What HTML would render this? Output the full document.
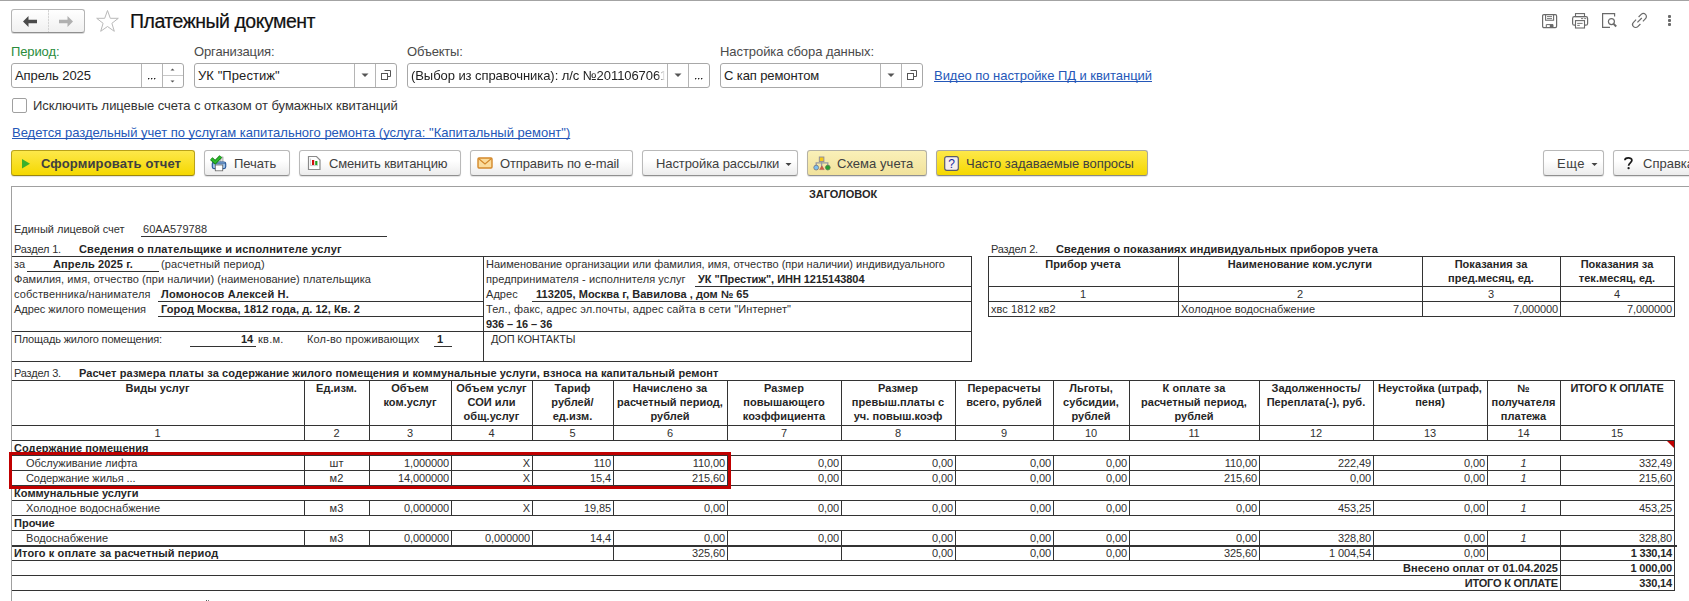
<!DOCTYPE html>
<html><head><meta charset="utf-8"><style>
html,body{margin:0;padding:0;background:#fff;width:1689px;height:601px;overflow:hidden;position:relative}
body{font-family:'Liberation Sans', sans-serif;}
body>div,body>svg{position:absolute}
</style></head><body>
<div style="left:0px;top:0px;width:1689px;height:1px;background:#a3a3a3;"></div>
<div style="left:11px;top:9px;width:74px;height:24px;box-sizing:border-box;border:1px solid #b4b4b4;border-bottom-color:#8f8f8f;border-radius:3px;background:linear-gradient(#ffffff,#f0f0f0);box-shadow:0 1px 0 rgba(0,0,0,0.15)"></div>
<div style="left:48px;top:10px;width:1px;height:22px;background:repeating-linear-gradient(#d4d4d4 0 2px,#ececec 2px 3px)"></div>
<svg style="left:22px;top:15px" width="16" height="13" viewBox="0 0 16 13"><path d="M1 6.5 L6.5 1 L6.5 4.8 L15 4.8 L15 8.2 L6.5 8.2 L6.5 12 Z" fill="#4a4a4a"/></svg>
<svg style="left:58px;top:15px" width="16" height="13" viewBox="0 0 16 13"><path d="M15 6.5 L9.5 1 L9.5 4.8 L1 4.8 L1 8.2 L9.5 8.2 L9.5 12 Z" fill="#b0b0b0"/></svg>
<svg style="left:95px;top:9px" width="25" height="24" viewBox="0 0 25 24"><path d="M12.5 1.5 L15.3 9.3 L23.3 9.3 L16.9 14.3 L19.3 22.3 L12.5 17.5 L5.7 22.3 L8.1 14.3 L1.7 9.3 L9.7 9.3 Z" fill="none" stroke="#b9b9b9" stroke-width="1"/></svg>
<div style="top:11px;font-size:19.5px;line-height:20px;height:20px;color:#111;white-space:nowrap;letter-spacing:-0.486px;left:130px;-webkit-text-stroke:0.2px #111;">Платежный документ</div>
<svg style="left:1540px;top:12px" width="20" height="18" viewBox="0 0 20 18"><rect x="2.6" y="2.6" width="14" height="13" rx="1.3" fill="none" stroke="#6a6a6a" stroke-width="1.2"/><path d="M5.6 2.6 V8.3 H13.6 V2.6" fill="none" stroke="#6a6a6a" stroke-width="1.1"/><line x1="7" y1="4.6" x2="12" y2="4.6" stroke="#6a6a6a" stroke-width="0.9"/><line x1="7" y1="6.6" x2="12" y2="6.6" stroke="#6a6a6a" stroke-width="0.9"/><path d="M6.3 15.6 V12.6 H13 V15.6" fill="none" stroke="#6a6a6a" stroke-width="1"/><rect x="9.8" y="12.6" width="3.2" height="3" fill="#6a6a6a"/></svg>
<svg style="left:1570px;top:11px" width="20" height="19" viewBox="0 0 20 19"><rect x="5.5" y="2.6" width="9" height="3" fill="none" stroke="#6a6a6a" stroke-width="1.1"/><rect x="2.6" y="5.6" width="15" height="8.6" rx="1.8" fill="none" stroke="#6a6a6a" stroke-width="1.2"/><rect x="5.5" y="9.6" width="9" height="7.4" fill="#fff" stroke="#6a6a6a" stroke-width="1.1"/><line x1="7.2" y1="12.4" x2="12.6" y2="12.4" stroke="#6a6a6a" stroke-width="0.9"/><line x1="7.2" y1="14.4" x2="9.8" y2="14.4" stroke="#6a6a6a" stroke-width="0.9"/><line x1="11" y1="7.6" x2="13.2" y2="7.6" stroke="#6a6a6a" stroke-width="0.9"/><line x1="14.2" y1="7.6" x2="16.2" y2="7.6" stroke="#6a6a6a" stroke-width="0.9"/></svg>
<svg style="left:1600px;top:11px" width="20" height="19" viewBox="0 0 20 19"><path d="M14.6 5.6 V2.6 H2.6 V16.4 H10" fill="none" stroke="#6a6a6a" stroke-width="1.2"/><circle cx="11.4" cy="10.6" r="3" fill="#fff" stroke="#6a6a6a" stroke-width="1.2"/><line x1="13.6" y1="12.9" x2="16.2" y2="15.5" stroke="#6a6a6a" stroke-width="2"/></svg>
<svg style="left:1630px;top:11px" width="20" height="19" viewBox="0 0 20 19"><path d="M7.4 11.4 L11.8 7" stroke="#6a6a6a" stroke-width="1.2"/><path d="M8.6 6 L11.2 3.4 a3 3 0 0 1 4.3 4.3 L12.9 10.3 M10.4 13 L7.8 15.6 a3 3 0 0 1 -4.3 -4.3 L6.1 8.7" fill="none" stroke="#6a6a6a" stroke-width="1.2"/></svg>
<div style="left:1668px;top:15px;width:3px;height:3px;border-radius:1px;background:#6a6a6a"></div>
<div style="left:1668px;top:19px;width:3px;height:3px;border-radius:1px;background:#6a6a6a"></div>
<div style="left:1668px;top:23px;width:3px;height:3px;border-radius:1px;background:#6a6a6a"></div>
<div style="top:42px;font-size:13px;line-height:20px;height:20px;color:#2a8c3c;white-space:nowrap;letter-spacing:-0.117px;left:11px;">Период:</div>
<div style="top:42px;font-size:13px;line-height:20px;height:20px;color:#4a4a4a;white-space:nowrap;letter-spacing:-0.136px;left:194px;">Организация:</div>
<div style="top:42px;font-size:13px;line-height:20px;height:20px;color:#4a4a4a;white-space:nowrap;letter-spacing:-0.192px;left:407px;">Объекты:</div>
<div style="top:42px;font-size:13px;line-height:20px;height:20px;color:#4a4a4a;white-space:nowrap;letter-spacing:-0.061px;left:720px;">Настройка сбора данных:</div>
<div style="left:11px;top:63px;width:173px;height:25px;box-sizing:border-box;border:1px solid #a8a8a8;border-radius:3px;background:#fff"></div>
<div style="left:141px;top:64px;width:1px;height:23px;background:#b5b5b5;"></div>
<div style="left:162px;top:64px;width:1px;height:23px;background:#b5b5b5;"></div>
<div style="top:66px;font-size:13px;line-height:20px;height:20px;color:#222;white-space:nowrap;letter-spacing:-0.067px;left:15px;">Апрель 2025</div>
<div style="left:148px;top:78px;width:1px;height:1px;background:#222;"></div>
<div style="left:149px;top:78px;width:1px;height:1px;background:#aaa;"></div>
<div style="left:148px;top:79px;width:1px;height:1px;background:#aaa;"></div>
<div style="left:151px;top:78px;width:1px;height:1px;background:#222;"></div>
<div style="left:152px;top:78px;width:1px;height:1px;background:#aaa;"></div>
<div style="left:151px;top:79px;width:1px;height:1px;background:#aaa;"></div>
<div style="left:154px;top:78px;width:1px;height:1px;background:#222;"></div>
<div style="left:155px;top:78px;width:1px;height:1px;background:#aaa;"></div>
<div style="left:154px;top:79px;width:1px;height:1px;background:#aaa;"></div>
<div style="left:163px;top:75px;width:20px;height:1px;background:#c8c8c8;"></div>
<svg style="left:169px;top:66px" width="7" height="20" viewBox="0 0 7 20"><path d="M1.5 4.5 L3.5 2.5 L5.5 4.5Z" fill="#555"/><path d="M1.5 14.5 L3.5 16.5 L5.5 14.5Z" fill="#555"/></svg>
<div style="left:194px;top:63px;width:203px;height:25px;box-sizing:border-box;border:1px solid #a8a8a8;border-radius:3px;background:#fff"></div>
<div style="left:354px;top:64px;width:1px;height:23px;background:#b5b5b5;"></div>
<div style="left:375px;top:64px;width:1px;height:23px;background:#b5b5b5;"></div>
<div style="top:66px;font-size:13px;line-height:20px;height:20px;color:#222;white-space:nowrap;letter-spacing:0.076px;left:198px;">УК &quot;Престиж&quot;</div>
<svg style="left:360.5px;top:73px" width="8" height="5" viewBox="0 0 8 5"><path d="M0.5 0.5 L7.5 0.5 L4 4Z" fill="#555"/></svg>
<svg style="left:380px;top:69px" width="12" height="12" viewBox="0 0 12 12"><path d="M4.5 1.5 H10.5 V7.5 H7.5" fill="none" stroke="#555" stroke-width="1"/><rect x="1.5" y="4.5" width="6" height="6" fill="none" stroke="#555" stroke-width="1"/></svg>
<div style="left:407px;top:63px;width:303px;height:25px;box-sizing:border-box;border:1px solid #a8a8a8;border-radius:3px;background:#fff"></div>
<div style="left:667px;top:64px;width:1px;height:23px;background:#b5b5b5;"></div>
<div style="left:688px;top:64px;width:1px;height:23px;background:#b5b5b5;"></div>
<div style="left:411px;top:66px;width:254px;overflow:hidden;-webkit-mask-image:linear-gradient(to right,#000 246px,transparent 254px);mask-image:linear-gradient(to right,#000 246px,transparent 254px);font-size:13px;line-height:20px;height:20px;color:#222;white-space:nowrap;letter-spacing:-0.069px">(Выбор из справочника): л/с №2011067061</div>
<svg style="left:673.5px;top:73px" width="8" height="5" viewBox="0 0 8 5"><path d="M0.5 0.5 L7.5 0.5 L4 4Z" fill="#555"/></svg>
<div style="left:695px;top:78px;width:1px;height:1px;background:#222;"></div>
<div style="left:696px;top:78px;width:1px;height:1px;background:#aaa;"></div>
<div style="left:695px;top:79px;width:1px;height:1px;background:#aaa;"></div>
<div style="left:698px;top:78px;width:1px;height:1px;background:#222;"></div>
<div style="left:699px;top:78px;width:1px;height:1px;background:#aaa;"></div>
<div style="left:698px;top:79px;width:1px;height:1px;background:#aaa;"></div>
<div style="left:701px;top:78px;width:1px;height:1px;background:#222;"></div>
<div style="left:702px;top:78px;width:1px;height:1px;background:#aaa;"></div>
<div style="left:701px;top:79px;width:1px;height:1px;background:#aaa;"></div>
<div style="left:720px;top:63px;width:203px;height:25px;box-sizing:border-box;border:1px solid #a8a8a8;border-radius:3px;background:#fff"></div>
<div style="left:880px;top:64px;width:1px;height:23px;background:#b5b5b5;"></div>
<div style="left:901px;top:64px;width:1px;height:23px;background:#b5b5b5;"></div>
<div style="top:66px;font-size:13px;line-height:20px;height:20px;color:#222;white-space:nowrap;letter-spacing:-0.110px;left:724px;">С кап ремонтом</div>
<svg style="left:886.5px;top:73px" width="8" height="5" viewBox="0 0 8 5"><path d="M0.5 0.5 L7.5 0.5 L4 4Z" fill="#555"/></svg>
<svg style="left:906px;top:69px" width="12" height="12" viewBox="0 0 12 12"><path d="M4.5 1.5 H10.5 V7.5 H7.5" fill="none" stroke="#555" stroke-width="1"/><rect x="1.5" y="4.5" width="6" height="6" fill="none" stroke="#555" stroke-width="1"/></svg>
<div style="top:66px;font-size:13px;line-height:20px;height:20px;color:#2457b8;white-space:nowrap;letter-spacing:-0.043px;left:934px;text-decoration:underline;text-decoration-skip-ink:none;">Видео по настройке ПД и квитанций</div>
<div style="left:12px;top:98px;width:15px;height:15px;box-sizing:border-box;border:1px solid #a0a0a0;border-radius:2px;background:#fff"></div>
<div style="top:96px;font-size:13px;line-height:20px;height:20px;color:#333;white-space:nowrap;letter-spacing:-0.050px;left:33px;">Исключить лицевые счета с отказом от бумажных квитанций</div>
<div style="top:123px;font-size:13px;line-height:20px;height:20px;color:#2457b8;white-space:nowrap;left:12px;text-decoration:underline;text-decoration-skip-ink:none;">Ведется раздельный учет по услугам капитального ремонта (услуга: &quot;Капитальный ремонт&quot;)</div>
<div style="left:11px;top:150px;width:184px;height:26px;box-sizing:border-box;border:1px solid #b9a21a;border-bottom-color:#9a8610;border-radius:3px;background:linear-gradient(#fde84a,#f5d800);box-shadow:0 1px 1px rgba(0,0,0,0.12)"></div>
<svg style="left:22px;top:159px" width="9" height="10" viewBox="0 0 9 10"><path d="M0 0 L8 4.75 L0 9.5Z" fill="#3bb02c"/></svg>
<div style="top:154px;font-size:13px;line-height:20px;height:20px;color:#404040;white-space:nowrap;font-weight:bold;letter-spacing:0.138px;left:41px;">Сформировать отчет</div>
<div style="left:204px;top:150px;width:86px;height:26px;box-sizing:border-box;border:1px solid #b9b9b9;border-bottom-color:#909090;border-radius:3px;background:linear-gradient(#ffffff 40%,#ececec);box-shadow:0 1px 1px rgba(0,0,0,0.12)"></div>
<svg style="left:210px;top:154px" width="18" height="18" viewBox="0 0 18 18"><rect x="10" y="3" width="3" height="6" fill="#ddd" stroke="#888" stroke-width="0.6"/><rect x="2.3" y="8" width="13.4" height="6.6" rx="1.8" fill="#9fc5ec" stroke="#2a5a9a" stroke-width="1.2"/><line x1="3" y1="9.6" x2="15" y2="9.6" stroke="#4a6ea0" stroke-width="0.8"/><rect x="5.3" y="11" width="7.4" height="5.8" fill="#fff" stroke="#666" stroke-width="0.8"/><path d="M1.3 4.6 L5.2 8.2 L10.8 2.4" fill="none" stroke="#157a15" stroke-width="3.6"/><path d="M1.3 4.6 L5.2 8.2 L10.8 2.4" fill="none" stroke="#2cb82c" stroke-width="2.2"/></svg>
<div style="top:154px;font-size:13px;line-height:20px;height:20px;color:#404040;white-space:nowrap;letter-spacing:-0.082px;left:234px;">Печать</div>
<div style="left:299px;top:150px;width:162px;height:26px;box-sizing:border-box;border:1px solid #b9b9b9;border-bottom-color:#909090;border-radius:3px;background:linear-gradient(#ffffff 40%,#ececec);box-shadow:0 1px 1px rgba(0,0,0,0.12)"></div>
<svg style="left:307px;top:155px" width="15" height="16" viewBox="0 0 15 16"><path d="M1.5 1.5 H9.5 L13 5 V14.5 H1.5Z" fill="#fff" stroke="#8a8a8a" stroke-width="1.2"/><rect x="5" y="5" width="2.2" height="5" fill="#d01010"/><rect x="8.2" y="6" width="2.2" height="4" fill="#20a020"/><line x1="3.6" y1="3.5" x2="3.6" y2="10.6" stroke="#aaa" stroke-width="0.6"/><line x1="3.6" y1="10.6" x2="11" y2="10.6" stroke="#aaa" stroke-width="0.6"/></svg>
<div style="top:154px;font-size:13px;line-height:20px;height:20px;color:#404040;white-space:nowrap;letter-spacing:-0.146px;left:329px;">Сменить квитанцию</div>
<div style="left:470px;top:150px;width:163px;height:26px;box-sizing:border-box;border:1px solid #b9b9b9;border-bottom-color:#909090;border-radius:3px;background:linear-gradient(#ffffff 40%,#ececec);box-shadow:0 1px 1px rgba(0,0,0,0.12)"></div>
<svg style="left:477px;top:157px" width="16" height="12" viewBox="0 0 16 12"><rect x="1" y="1" width="14" height="10" rx="1" fill="#fbdc9c" stroke="#d3882a" stroke-width="1.4"/><path d="M1.5 1.5 L8 7 L14.5 1.5" fill="none" stroke="#d3882a" stroke-width="1.1"/></svg>
<div style="top:154px;font-size:13px;line-height:20px;height:20px;color:#404040;white-space:nowrap;letter-spacing:-0.119px;left:500px;">Отправить по e-mail</div>
<div style="left:642px;top:150px;width:156px;height:26px;box-sizing:border-box;border:1px solid #b9b9b9;border-bottom-color:#909090;border-radius:3px;background:linear-gradient(#ffffff 40%,#ececec);box-shadow:0 1px 1px rgba(0,0,0,0.12)"></div>
<div style="top:154px;font-size:13px;line-height:20px;height:20px;color:#404040;white-space:nowrap;letter-spacing:-0.092px;left:656px;">Настройка рассылки</div>
<svg style="left:785px;top:163px" width="7" height="4" viewBox="0 0 7 4"><path d="M0.5 0 H6.5 L3.5 3Z" fill="#444"/></svg>
<div style="left:807px;top:150px;width:120px;height:26px;box-sizing:border-box;border:1px solid #b5b2a5;border-bottom-color:#909090;border-radius:3px;background:linear-gradient(#faf0b8,#f1e29c);box-shadow:0 1px 1px rgba(0,0,0,0.12)"></div>
<svg style="left:812px;top:155px" width="20" height="17" viewBox="0 0 20 17"><rect x="7.3" y="2" width="4.6" height="4.6" fill="#f5c818" stroke="#8a8aa0" stroke-width="0.9"/><path d="M9.6 6.6 V12 M4.2 11 V7.9 H15.8 V11" fill="none" stroke="#9a9aa0" stroke-width="1.3"/><circle cx="4.2" cy="12.6" r="2.4" fill="#7cc0f0" stroke="#667" stroke-width="0.7"/><path d="M7.6 14.6 L9.9 10.8 L12.2 14.6Z" fill="#d06040" stroke="#a55" stroke-width="0.5"/><circle cx="15.8" cy="12.6" r="2.4" fill="#28a030" stroke="#575" stroke-width="0.7"/></svg>
<div style="top:154px;font-size:13px;line-height:20px;height:20px;color:#404040;white-space:nowrap;letter-spacing:0.048px;left:837px;">Схема учета</div>
<div style="left:936px;top:150px;width:212px;height:26px;box-sizing:border-box;border:1px solid #aaa8a0;border-bottom-color:#8a8a80;border-radius:3px;background:linear-gradient(#fde84a,#f5d800);box-shadow:0 1px 1px rgba(0,0,0,0.12)"></div>
<svg style="left:944px;top:156px" width="15" height="15" viewBox="0 0 15 15"><rect x="0.7" y="0.7" width="13.6" height="13.6" rx="2" fill="#f6eef0" stroke="#5a5a6a" stroke-width="1.2"/><text x="7.5" y="12" font-family="Liberation Sans" font-size="12" fill="#1a2aa0" text-anchor="middle">?</text></svg>
<div style="top:154px;font-size:13px;line-height:20px;height:20px;color:#404040;white-space:nowrap;letter-spacing:-0.039px;left:966px;">Часто задаваемые вопросы</div>
<div style="left:1543px;top:150px;width:61px;height:26px;box-sizing:border-box;border:1px solid #b9b9b9;border-bottom-color:#909090;border-radius:3px;background:linear-gradient(#ffffff 40%,#ececec);box-shadow:0 1px 1px rgba(0,0,0,0.12)"></div>
<div style="top:154px;font-size:13px;line-height:20px;height:20px;color:#404040;white-space:nowrap;letter-spacing:0.549px;left:1557px;">Еще</div>
<svg style="left:1591px;top:163px" width="7" height="4" viewBox="0 0 7 4"><path d="M0.5 0 H6.5 L3.5 3Z" fill="#444"/></svg>
<div style="left:1613px;top:150px;width:108px;height:26px;box-sizing:border-box;border:1px solid #b9b9b9;border-bottom-color:#909090;border-radius:3px;background:linear-gradient(#ffffff 40%,#ececec);box-shadow:0 1px 1px rgba(0,0,0,0.12)"></div>
<svg style="left:1623px;top:156px" width="11" height="14" viewBox="0 0 11 14"><path d="M1.9 4.2 C1.9 1.2 8.9 0.9 8.9 4.3 C8.9 6.6 5.6 7.2 5.6 9.8" fill="none" stroke="#1a1a1a" stroke-width="1.7"/><circle cx="5.6" cy="12.2" r="1.15" fill="#1a1a1a"/></svg>
<div style="top:154px;font-size:13px;line-height:20px;height:20px;color:#404040;white-space:nowrap;left:1643px;">Справка</div>
<div style="left:11px;top:186px;width:1678px;height:1px;background:#a0a0a0;"></div>
<div style="left:11px;top:186px;width:1px;height:415px;background:#a0a0a0;"></div>
<div style="top:184px;font-size:11px;line-height:20px;height:20px;color:#262626;white-space:nowrap;font-weight:bold;letter-spacing:-0.026px;left:809px;">ЗАГОЛОВОК</div>
<div style="top:219px;font-size:11px;line-height:20px;height:20px;color:#303030;white-space:nowrap;letter-spacing:-0.015px;left:14px;">Единый лицевой счет</div>
<div style="top:219px;font-size:11px;line-height:20px;height:20px;color:#303030;white-space:nowrap;letter-spacing:0.050px;left:143px;">60AA579788</div>
<div style="left:141px;top:236px;width:246px;height:1px;background:#333333;"></div>
<div style="top:239px;font-size:11px;line-height:20px;height:20px;color:#303030;white-space:nowrap;letter-spacing:-0.177px;left:14px;">Раздел 1.</div>
<div style="top:239px;font-size:11px;line-height:20px;height:20px;color:#262626;white-space:nowrap;font-weight:bold;letter-spacing:0.174px;left:79px;">Сведения о плательщике и исполнителе услуг</div>
<div style="left:12px;top:256px;width:960px;height:1px;background:#333333;"></div>
<div style="left:483px;top:256px;width:1px;height:106px;background:#333333;"></div>
<div style="left:971px;top:256px;width:1px;height:106px;background:#333333;"></div>
<div style="top:254px;font-size:11px;line-height:20px;height:20px;color:#303030;white-space:nowrap;letter-spacing:0.050px;left:14px;">за</div>
<div style="left:27px;top:271px;width:132px;height:1px;background:#333333;"></div>
<div style="top:254px;font-size:11px;line-height:20px;height:20px;color:#262626;white-space:nowrap;font-weight:bold;letter-spacing:0.122px;left:-173px;width:532px;text-align:center;">Апрель 2025 г.</div>
<div style="top:254px;font-size:11px;line-height:20px;height:20px;color:#303030;white-space:nowrap;letter-spacing:0.134px;left:161px;">(расчетный период)</div>
<div style="top:269px;font-size:11px;line-height:20px;height:20px;color:#303030;white-space:nowrap;letter-spacing:0.057px;left:14px;">Фамилия, имя, отчество (при наличии) (наименование) плательщика</div>
<div style="top:284px;font-size:11px;line-height:20px;height:20px;color:#303030;white-space:nowrap;letter-spacing:0.125px;left:14px;">собственника/нанимателя</div>
<div style="top:284px;font-size:11px;line-height:20px;height:20px;color:#262626;white-space:nowrap;font-weight:bold;letter-spacing:0.190px;left:161px;">Ломоносов Алексей Н.</div>
<div style="left:158px;top:301px;width:326px;height:1px;background:#333333;"></div>
<div style="top:299px;font-size:11px;line-height:20px;height:20px;color:#303030;white-space:nowrap;letter-spacing:-0.029px;left:14px;">Адрес жилого помещения</div>
<div style="top:299px;font-size:11px;line-height:20px;height:20px;color:#262626;white-space:nowrap;font-weight:bold;letter-spacing:0.058px;left:161px;">Город Москва, 1812 года, д. 12, Кв. 2</div>
<div style="left:158px;top:316px;width:326px;height:1px;background:#333333;"></div>
<div style="left:12px;top:331px;width:960px;height:1px;background:#333333;"></div>
<div style="top:329px;font-size:11px;line-height:20px;height:20px;color:#303030;white-space:nowrap;letter-spacing:-0.163px;left:14px;">Площадь жилого помещения:</div>
<div style="left:190px;top:346px;width:66px;height:1px;background:#333333;"></div>
<div style="top:329px;font-size:11px;line-height:20px;height:20px;color:#262626;white-space:nowrap;font-weight:bold;letter-spacing:-0.150px;left:-347px;width:600px;text-align:right;">14</div>
<div style="top:329px;font-size:11px;line-height:20px;height:20px;color:#303030;white-space:nowrap;letter-spacing:0.271px;left:258px;">кв.м.</div>
<div style="top:329px;font-size:11px;line-height:20px;height:20px;color:#303030;white-space:nowrap;letter-spacing:0.154px;left:307px;">Кол-во проживающих</div>
<div style="left:434px;top:346px;width:18px;height:1px;background:#333333;"></div>
<div style="top:329px;font-size:11px;line-height:20px;height:20px;color:#262626;white-space:nowrap;font-weight:bold;letter-spacing:-0.150px;left:437px;">1</div>
<div style="left:12px;top:361px;width:960px;height:1px;background:#333333;"></div>
<div style="top:254px;font-size:11px;line-height:20px;height:20px;color:#303030;white-space:nowrap;letter-spacing:-0.001px;left:486px;">Наименование организации или фамилия, имя, отчество (при наличии) индивидуального</div>
<div style="top:269px;font-size:11px;line-height:20px;height:20px;color:#303030;white-space:nowrap;letter-spacing:0.103px;left:486px;">предпринимателя - исполнителя услуг</div>
<div style="top:269px;font-size:11px;line-height:20px;height:20px;color:#262626;white-space:nowrap;font-weight:bold;letter-spacing:-0.049px;left:698px;">УК &quot;Престиж&quot;, ИНН 1215143804</div>
<div style="left:695px;top:286px;width:277px;height:1px;background:#333333;"></div>
<div style="top:284px;font-size:11px;line-height:20px;height:20px;color:#303030;white-space:nowrap;letter-spacing:0.050px;left:486px;">Адрес</div>
<div style="top:284px;font-size:11px;line-height:20px;height:20px;color:#262626;white-space:nowrap;font-weight:bold;letter-spacing:0.061px;left:536px;">113205, Москва г, Вавилова , дом № 65</div>
<div style="left:532px;top:301px;width:440px;height:1px;background:#333333;"></div>
<div style="top:299px;font-size:11px;line-height:20px;height:20px;color:#303030;white-space:nowrap;letter-spacing:0.100px;left:486px;">Тел., факс, адрес эл.почты, адрес сайта в сети &quot;Интернет&quot;</div>
<div style="top:314px;font-size:11px;line-height:20px;height:20px;color:#262626;white-space:nowrap;font-weight:bold;letter-spacing:-0.084px;left:486px;">936 – 16 – 36</div>
<div style="top:329px;font-size:11px;line-height:20px;height:20px;color:#303030;white-space:nowrap;letter-spacing:-0.159px;left:491px;">ДОП КОНТАКТЫ</div>
<div style="top:239px;font-size:11px;line-height:20px;height:20px;color:#303030;white-space:nowrap;letter-spacing:-0.177px;left:991px;">Раздел 2.</div>
<div style="top:239px;font-size:11px;line-height:20px;height:20px;color:#262626;white-space:nowrap;font-weight:bold;letter-spacing:0.084px;left:1056px;">Сведения о показаниях индивидуальных приборов учета</div>
<div style="left:988px;top:256px;width:687px;height:1px;background:#333333;"></div>
<div style="left:988px;top:286px;width:687px;height:1px;background:#333333;"></div>
<div style="left:988px;top:301px;width:687px;height:1px;background:#333333;"></div>
<div style="left:988px;top:316px;width:687px;height:1px;background:#333333;"></div>
<div style="left:988px;top:256px;width:1px;height:61px;background:#333333;"></div>
<div style="left:1178px;top:256px;width:1px;height:61px;background:#333333;"></div>
<div style="left:1422px;top:256px;width:1px;height:61px;background:#333333;"></div>
<div style="left:1560px;top:256px;width:1px;height:61px;background:#333333;"></div>
<div style="left:1674px;top:256px;width:1px;height:61px;background:#333333;"></div>
<div style="top:254px;font-size:11px;line-height:20px;height:20px;color:#262626;white-space:nowrap;font-weight:bold;letter-spacing:0.050px;left:788px;width:590px;text-align:center;">Прибор учета</div>
<div style="top:254px;font-size:11px;line-height:20px;height:20px;color:#262626;white-space:nowrap;font-weight:bold;letter-spacing:0.050px;left:978px;width:644px;text-align:center;">Наименование ком.услуги</div>
<div style="top:254px;font-size:11px;line-height:20px;height:20px;color:#262626;white-space:nowrap;font-weight:bold;letter-spacing:0.050px;left:1222px;width:538px;text-align:center;">Показания за</div>
<div style="top:268px;font-size:11px;line-height:20px;height:20px;color:#262626;white-space:nowrap;font-weight:bold;letter-spacing:0.050px;left:1222px;width:538px;text-align:center;">пред.месяц, ед.</div>
<div style="top:254px;font-size:11px;line-height:20px;height:20px;color:#262626;white-space:nowrap;font-weight:bold;letter-spacing:0.050px;left:1360px;width:514px;text-align:center;">Показания за</div>
<div style="top:268px;font-size:11px;line-height:20px;height:20px;color:#262626;white-space:nowrap;font-weight:bold;letter-spacing:0.050px;left:1360px;width:514px;text-align:center;">тек.месяц, ед.</div>
<div style="top:284px;font-size:11px;line-height:20px;height:20px;color:#303030;white-space:nowrap;letter-spacing:-0.100px;left:788px;width:590px;text-align:center;">1</div>
<div style="top:284px;font-size:11px;line-height:20px;height:20px;color:#303030;white-space:nowrap;letter-spacing:-0.100px;left:978px;width:644px;text-align:center;">2</div>
<div style="top:284px;font-size:11px;line-height:20px;height:20px;color:#303030;white-space:nowrap;letter-spacing:-0.100px;left:1222px;width:538px;text-align:center;">3</div>
<div style="top:284px;font-size:11px;line-height:20px;height:20px;color:#303030;white-space:nowrap;letter-spacing:-0.100px;left:1360px;width:514px;text-align:center;">4</div>
<div style="top:299px;font-size:11px;line-height:20px;height:20px;color:#303030;white-space:nowrap;letter-spacing:0.050px;left:991px;">хвс 1812 кв2</div>
<div style="top:299px;font-size:11px;line-height:20px;height:20px;color:#303030;white-space:nowrap;letter-spacing:0.050px;left:1181px;">Холодное водоснабжение</div>
<div style="top:299px;font-size:11px;line-height:20px;height:20px;color:#303030;white-space:nowrap;letter-spacing:-0.100px;left:958px;width:600px;text-align:right;">7,000000</div>
<div style="top:299px;font-size:11px;line-height:20px;height:20px;color:#303030;white-space:nowrap;letter-spacing:-0.100px;left:1072px;width:600px;text-align:right;">7,000000</div>
<div style="top:363px;font-size:11px;line-height:20px;height:20px;color:#303030;white-space:nowrap;letter-spacing:-0.177px;left:14px;">Раздел 3.</div>
<div style="top:363px;font-size:11px;line-height:20px;height:20px;color:#262626;white-space:nowrap;font-weight:bold;letter-spacing:0.114px;left:79px;">Расчет размера платы за содержание жилого помещения и коммунальные услуги, взноса на капитальный ремонт</div>
<div style="left:12px;top:380px;width:1663px;height:1px;background:#333333;"></div>
<div style="left:12px;top:425px;width:1663px;height:1px;background:#333333;"></div>
<div style="left:12px;top:440px;width:1663px;height:1px;background:#333333;"></div>
<div style="left:12px;top:455px;width:1663px;height:1px;background:#333333;"></div>
<div style="left:12px;top:470px;width:1663px;height:1px;background:#333333;"></div>
<div style="left:12px;top:485px;width:1663px;height:1px;background:#333333;"></div>
<div style="left:12px;top:500px;width:1663px;height:1px;background:#333333;"></div>
<div style="left:12px;top:515px;width:1663px;height:1px;background:#333333;"></div>
<div style="left:12px;top:530px;width:1663px;height:1px;background:#333333;"></div>
<div style="left:12px;top:545px;width:1665px;height:2px;background:#333333;"></div>
<div style="left:12px;top:560px;width:1663px;height:1px;background:#333333;"></div>
<div style="left:12px;top:575px;width:1663px;height:1px;background:#333333;"></div>
<div style="left:12px;top:590px;width:1663px;height:1px;background:#333333;"></div>
<div style="left:304px;top:380px;width:1px;height:61px;background:#333333;"></div>
<div style="left:369px;top:380px;width:1px;height:61px;background:#333333;"></div>
<div style="left:451px;top:380px;width:1px;height:61px;background:#333333;"></div>
<div style="left:532px;top:380px;width:1px;height:61px;background:#333333;"></div>
<div style="left:613px;top:380px;width:1px;height:61px;background:#333333;"></div>
<div style="left:727px;top:380px;width:1px;height:61px;background:#333333;"></div>
<div style="left:841px;top:380px;width:1px;height:61px;background:#333333;"></div>
<div style="left:955px;top:380px;width:1px;height:61px;background:#333333;"></div>
<div style="left:1053px;top:380px;width:1px;height:61px;background:#333333;"></div>
<div style="left:1129px;top:380px;width:1px;height:61px;background:#333333;"></div>
<div style="left:1259px;top:380px;width:1px;height:61px;background:#333333;"></div>
<div style="left:1373px;top:380px;width:1px;height:61px;background:#333333;"></div>
<div style="left:1487px;top:380px;width:1px;height:61px;background:#333333;"></div>
<div style="left:1560px;top:380px;width:1px;height:61px;background:#333333;"></div>
<div style="left:1674px;top:380px;width:1px;height:61px;background:#333333;"></div>
<div style="left:1674px;top:380px;width:1px;height:211px;background:#333333;"></div>
<div style="left:304px;top:455px;width:1px;height:31px;background:#333333;"></div>
<div style="left:369px;top:455px;width:1px;height:31px;background:#333333;"></div>
<div style="left:451px;top:455px;width:1px;height:31px;background:#333333;"></div>
<div style="left:532px;top:455px;width:1px;height:31px;background:#333333;"></div>
<div style="left:613px;top:455px;width:1px;height:31px;background:#333333;"></div>
<div style="left:727px;top:455px;width:1px;height:31px;background:#333333;"></div>
<div style="left:841px;top:455px;width:1px;height:31px;background:#333333;"></div>
<div style="left:955px;top:455px;width:1px;height:31px;background:#333333;"></div>
<div style="left:1053px;top:455px;width:1px;height:31px;background:#333333;"></div>
<div style="left:1129px;top:455px;width:1px;height:31px;background:#333333;"></div>
<div style="left:1259px;top:455px;width:1px;height:31px;background:#333333;"></div>
<div style="left:1373px;top:455px;width:1px;height:31px;background:#333333;"></div>
<div style="left:1487px;top:455px;width:1px;height:31px;background:#333333;"></div>
<div style="left:1560px;top:455px;width:1px;height:31px;background:#333333;"></div>
<div style="left:304px;top:500px;width:1px;height:16px;background:#333333;"></div>
<div style="left:369px;top:500px;width:1px;height:16px;background:#333333;"></div>
<div style="left:451px;top:500px;width:1px;height:16px;background:#333333;"></div>
<div style="left:532px;top:500px;width:1px;height:16px;background:#333333;"></div>
<div style="left:613px;top:500px;width:1px;height:16px;background:#333333;"></div>
<div style="left:727px;top:500px;width:1px;height:16px;background:#333333;"></div>
<div style="left:841px;top:500px;width:1px;height:16px;background:#333333;"></div>
<div style="left:955px;top:500px;width:1px;height:16px;background:#333333;"></div>
<div style="left:1053px;top:500px;width:1px;height:16px;background:#333333;"></div>
<div style="left:1129px;top:500px;width:1px;height:16px;background:#333333;"></div>
<div style="left:1259px;top:500px;width:1px;height:16px;background:#333333;"></div>
<div style="left:1373px;top:500px;width:1px;height:16px;background:#333333;"></div>
<div style="left:1487px;top:500px;width:1px;height:16px;background:#333333;"></div>
<div style="left:1560px;top:500px;width:1px;height:16px;background:#333333;"></div>
<div style="left:304px;top:530px;width:1px;height:16px;background:#333333;"></div>
<div style="left:369px;top:530px;width:1px;height:16px;background:#333333;"></div>
<div style="left:451px;top:530px;width:1px;height:16px;background:#333333;"></div>
<div style="left:532px;top:530px;width:1px;height:16px;background:#333333;"></div>
<div style="left:613px;top:530px;width:1px;height:16px;background:#333333;"></div>
<div style="left:727px;top:530px;width:1px;height:16px;background:#333333;"></div>
<div style="left:841px;top:530px;width:1px;height:16px;background:#333333;"></div>
<div style="left:955px;top:530px;width:1px;height:16px;background:#333333;"></div>
<div style="left:1053px;top:530px;width:1px;height:16px;background:#333333;"></div>
<div style="left:1129px;top:530px;width:1px;height:16px;background:#333333;"></div>
<div style="left:1259px;top:530px;width:1px;height:16px;background:#333333;"></div>
<div style="left:1373px;top:530px;width:1px;height:16px;background:#333333;"></div>
<div style="left:1487px;top:530px;width:1px;height:16px;background:#333333;"></div>
<div style="left:1560px;top:530px;width:1px;height:16px;background:#333333;"></div>
<div style="left:613px;top:545px;width:1px;height:16px;background:#333333;"></div>
<div style="left:727px;top:545px;width:1px;height:16px;background:#333333;"></div>
<div style="left:841px;top:545px;width:1px;height:16px;background:#333333;"></div>
<div style="left:955px;top:545px;width:1px;height:16px;background:#333333;"></div>
<div style="left:1053px;top:545px;width:1px;height:16px;background:#333333;"></div>
<div style="left:1129px;top:545px;width:1px;height:16px;background:#333333;"></div>
<div style="left:1259px;top:545px;width:1px;height:16px;background:#333333;"></div>
<div style="left:1373px;top:545px;width:1px;height:16px;background:#333333;"></div>
<div style="left:1487px;top:545px;width:1px;height:16px;background:#333333;"></div>
<div style="left:1560px;top:545px;width:1px;height:16px;background:#333333;"></div>
<div style="left:1560px;top:560px;width:1px;height:31px;background:#333333;"></div>
<div style="top:378px;font-size:11px;line-height:20px;height:20px;color:#262626;white-space:nowrap;font-weight:bold;letter-spacing:0.050px;left:-189px;width:693px;text-align:center;">Виды услуг</div>
<div style="top:423px;font-size:11px;line-height:20px;height:20px;color:#303030;white-space:nowrap;letter-spacing:-0.100px;left:-189px;width:693px;text-align:center;">1</div>
<div style="top:378px;font-size:11px;line-height:20px;height:20px;color:#262626;white-space:nowrap;font-weight:bold;letter-spacing:0.050px;left:104px;width:465px;text-align:center;">Ед.изм.</div>
<div style="top:423px;font-size:11px;line-height:20px;height:20px;color:#303030;white-space:nowrap;letter-spacing:-0.100px;left:104px;width:465px;text-align:center;">2</div>
<div style="top:378px;font-size:11px;line-height:20px;height:20px;color:#262626;white-space:nowrap;font-weight:bold;letter-spacing:0.050px;left:169px;width:482px;text-align:center;">Объем</div>
<div style="top:392px;font-size:11px;line-height:20px;height:20px;color:#262626;white-space:nowrap;font-weight:bold;letter-spacing:0.050px;left:169px;width:482px;text-align:center;">ком.услуг</div>
<div style="top:423px;font-size:11px;line-height:20px;height:20px;color:#303030;white-space:nowrap;letter-spacing:-0.100px;left:169px;width:482px;text-align:center;">3</div>
<div style="top:378px;font-size:11px;line-height:20px;height:20px;color:#262626;white-space:nowrap;font-weight:bold;letter-spacing:0.050px;left:251px;width:481px;text-align:center;">Объем услуг</div>
<div style="top:392px;font-size:11px;line-height:20px;height:20px;color:#262626;white-space:nowrap;font-weight:bold;letter-spacing:0.050px;left:251px;width:481px;text-align:center;">СОИ или</div>
<div style="top:406px;font-size:11px;line-height:20px;height:20px;color:#262626;white-space:nowrap;font-weight:bold;letter-spacing:0.050px;left:251px;width:481px;text-align:center;">общ.услуг</div>
<div style="top:423px;font-size:11px;line-height:20px;height:20px;color:#303030;white-space:nowrap;letter-spacing:-0.100px;left:251px;width:481px;text-align:center;">4</div>
<div style="top:378px;font-size:11px;line-height:20px;height:20px;color:#262626;white-space:nowrap;font-weight:bold;letter-spacing:0.050px;left:332px;width:481px;text-align:center;">Тариф</div>
<div style="top:392px;font-size:11px;line-height:20px;height:20px;color:#262626;white-space:nowrap;font-weight:bold;letter-spacing:0.050px;left:332px;width:481px;text-align:center;">рублей/</div>
<div style="top:406px;font-size:11px;line-height:20px;height:20px;color:#262626;white-space:nowrap;font-weight:bold;letter-spacing:0.050px;left:332px;width:481px;text-align:center;">ед.изм.</div>
<div style="top:423px;font-size:11px;line-height:20px;height:20px;color:#303030;white-space:nowrap;letter-spacing:-0.100px;left:332px;width:481px;text-align:center;">5</div>
<div style="top:378px;font-size:11px;line-height:20px;height:20px;color:#262626;white-space:nowrap;font-weight:bold;letter-spacing:0.050px;left:413px;width:514px;text-align:center;">Начислено за</div>
<div style="top:392px;font-size:11px;line-height:20px;height:20px;color:#262626;white-space:nowrap;font-weight:bold;letter-spacing:0.050px;left:413px;width:514px;text-align:center;">расчетный период,</div>
<div style="top:406px;font-size:11px;line-height:20px;height:20px;color:#262626;white-space:nowrap;font-weight:bold;letter-spacing:0.050px;left:413px;width:514px;text-align:center;">рублей</div>
<div style="top:423px;font-size:11px;line-height:20px;height:20px;color:#303030;white-space:nowrap;letter-spacing:-0.100px;left:413px;width:514px;text-align:center;">6</div>
<div style="top:378px;font-size:11px;line-height:20px;height:20px;color:#262626;white-space:nowrap;font-weight:bold;letter-spacing:0.050px;left:527px;width:514px;text-align:center;">Размер</div>
<div style="top:392px;font-size:11px;line-height:20px;height:20px;color:#262626;white-space:nowrap;font-weight:bold;letter-spacing:0.050px;left:527px;width:514px;text-align:center;">повышающего</div>
<div style="top:406px;font-size:11px;line-height:20px;height:20px;color:#262626;white-space:nowrap;font-weight:bold;letter-spacing:0.050px;left:527px;width:514px;text-align:center;">коэффициента</div>
<div style="top:423px;font-size:11px;line-height:20px;height:20px;color:#303030;white-space:nowrap;letter-spacing:-0.100px;left:527px;width:514px;text-align:center;">7</div>
<div style="top:378px;font-size:11px;line-height:20px;height:20px;color:#262626;white-space:nowrap;font-weight:bold;letter-spacing:0.050px;left:641px;width:514px;text-align:center;">Размер</div>
<div style="top:392px;font-size:11px;line-height:20px;height:20px;color:#262626;white-space:nowrap;font-weight:bold;letter-spacing:0.050px;left:641px;width:514px;text-align:center;">превыш.платы с</div>
<div style="top:406px;font-size:11px;line-height:20px;height:20px;color:#262626;white-space:nowrap;font-weight:bold;letter-spacing:0.050px;left:641px;width:514px;text-align:center;">уч. повыш.коэф</div>
<div style="top:423px;font-size:11px;line-height:20px;height:20px;color:#303030;white-space:nowrap;letter-spacing:-0.100px;left:641px;width:514px;text-align:center;">8</div>
<div style="top:378px;font-size:11px;line-height:20px;height:20px;color:#262626;white-space:nowrap;font-weight:bold;letter-spacing:0.050px;left:755px;width:498px;text-align:center;">Перерасчеты</div>
<div style="top:392px;font-size:11px;line-height:20px;height:20px;color:#262626;white-space:nowrap;font-weight:bold;letter-spacing:0.050px;left:755px;width:498px;text-align:center;">всего, рублей</div>
<div style="top:423px;font-size:11px;line-height:20px;height:20px;color:#303030;white-space:nowrap;letter-spacing:-0.100px;left:755px;width:498px;text-align:center;">9</div>
<div style="top:378px;font-size:11px;line-height:20px;height:20px;color:#262626;white-space:nowrap;font-weight:bold;letter-spacing:0.050px;left:853px;width:476px;text-align:center;">Льготы,</div>
<div style="top:392px;font-size:11px;line-height:20px;height:20px;color:#262626;white-space:nowrap;font-weight:bold;letter-spacing:0.050px;left:853px;width:476px;text-align:center;">субсидии,</div>
<div style="top:406px;font-size:11px;line-height:20px;height:20px;color:#262626;white-space:nowrap;font-weight:bold;letter-spacing:0.050px;left:853px;width:476px;text-align:center;">рублей</div>
<div style="top:423px;font-size:11px;line-height:20px;height:20px;color:#303030;white-space:nowrap;letter-spacing:-0.100px;left:853px;width:476px;text-align:center;">10</div>
<div style="top:378px;font-size:11px;line-height:20px;height:20px;color:#262626;white-space:nowrap;font-weight:bold;letter-spacing:0.050px;left:929px;width:530px;text-align:center;">К оплате за</div>
<div style="top:392px;font-size:11px;line-height:20px;height:20px;color:#262626;white-space:nowrap;font-weight:bold;letter-spacing:0.050px;left:929px;width:530px;text-align:center;">расчетный период,</div>
<div style="top:406px;font-size:11px;line-height:20px;height:20px;color:#262626;white-space:nowrap;font-weight:bold;letter-spacing:0.050px;left:929px;width:530px;text-align:center;">рублей</div>
<div style="top:423px;font-size:11px;line-height:20px;height:20px;color:#303030;white-space:nowrap;letter-spacing:-0.100px;left:929px;width:530px;text-align:center;">11</div>
<div style="top:378px;font-size:11px;line-height:20px;height:20px;color:#262626;white-space:nowrap;font-weight:bold;letter-spacing:0.050px;left:1059px;width:514px;text-align:center;">Задолженность/</div>
<div style="top:392px;font-size:11px;line-height:20px;height:20px;color:#262626;white-space:nowrap;font-weight:bold;letter-spacing:0.050px;left:1059px;width:514px;text-align:center;">Переплата(-), руб.</div>
<div style="top:423px;font-size:11px;line-height:20px;height:20px;color:#303030;white-space:nowrap;letter-spacing:-0.100px;left:1059px;width:514px;text-align:center;">12</div>
<div style="top:378px;font-size:11px;line-height:20px;height:20px;color:#262626;white-space:nowrap;font-weight:bold;letter-spacing:0.050px;left:1173px;width:514px;text-align:center;">Неустойка (штраф,</div>
<div style="top:392px;font-size:11px;line-height:20px;height:20px;color:#262626;white-space:nowrap;font-weight:bold;letter-spacing:0.050px;left:1173px;width:514px;text-align:center;">пеня)</div>
<div style="top:423px;font-size:11px;line-height:20px;height:20px;color:#303030;white-space:nowrap;letter-spacing:-0.100px;left:1173px;width:514px;text-align:center;">13</div>
<div style="top:378px;font-size:11px;line-height:20px;height:20px;color:#262626;white-space:nowrap;font-weight:bold;letter-spacing:0.050px;left:1287px;width:473px;text-align:center;">№</div>
<div style="top:392px;font-size:11px;line-height:20px;height:20px;color:#262626;white-space:nowrap;font-weight:bold;letter-spacing:0.050px;left:1287px;width:473px;text-align:center;">получателя</div>
<div style="top:406px;font-size:11px;line-height:20px;height:20px;color:#262626;white-space:nowrap;font-weight:bold;letter-spacing:0.050px;left:1287px;width:473px;text-align:center;">платежа</div>
<div style="top:423px;font-size:11px;line-height:20px;height:20px;color:#303030;white-space:nowrap;letter-spacing:-0.100px;left:1287px;width:473px;text-align:center;">14</div>
<div style="top:378px;font-size:11px;line-height:20px;height:20px;color:#262626;white-space:nowrap;font-weight:bold;letter-spacing:-0.201px;left:1360px;width:514px;text-align:center;">ИТОГО К ОПЛАТЕ</div>
<div style="top:423px;font-size:11px;line-height:20px;height:20px;color:#303030;white-space:nowrap;letter-spacing:-0.100px;left:1360px;width:514px;text-align:center;">15</div>
<div style="top:438px;font-size:11px;line-height:20px;height:20px;color:#262626;white-space:nowrap;font-weight:bold;letter-spacing:0.050px;left:14px;">Содержание помещения</div>
<div style="top:483px;font-size:11px;line-height:20px;height:20px;color:#262626;white-space:nowrap;font-weight:bold;letter-spacing:0.050px;left:14px;">Коммунальные услуги</div>
<div style="top:513px;font-size:11px;line-height:20px;height:20px;color:#262626;white-space:nowrap;font-weight:bold;letter-spacing:0.050px;left:14px;">Прочие</div>
<div style="top:453px;font-size:11px;line-height:20px;height:20px;color:#303030;white-space:nowrap;letter-spacing:0.004px;left:26px;">Обслуживание лифта</div>
<div style="top:453px;font-size:11px;line-height:20px;height:20px;color:#303030;white-space:nowrap;letter-spacing:0.050px;left:104px;width:465px;text-align:center;">шт</div>
<div style="top:453px;font-size:11px;line-height:20px;height:20px;color:#303030;white-space:nowrap;letter-spacing:-0.100px;left:-151px;width:600px;text-align:right;">1,000000</div>
<div style="top:453px;font-size:11px;line-height:20px;height:20px;color:#303030;white-space:nowrap;letter-spacing:-0.100px;left:-70px;width:600px;text-align:right;">X</div>
<div style="top:453px;font-size:11px;line-height:20px;height:20px;color:#303030;white-space:nowrap;letter-spacing:-0.100px;left:11px;width:600px;text-align:right;">110</div>
<div style="top:453px;font-size:11px;line-height:20px;height:20px;color:#303030;white-space:nowrap;letter-spacing:-0.100px;left:125px;width:600px;text-align:right;">110,00</div>
<div style="top:453px;font-size:11px;line-height:20px;height:20px;color:#303030;white-space:nowrap;letter-spacing:-0.100px;left:239px;width:600px;text-align:right;">0,00</div>
<div style="top:453px;font-size:11px;line-height:20px;height:20px;color:#303030;white-space:nowrap;letter-spacing:-0.100px;left:353px;width:600px;text-align:right;">0,00</div>
<div style="top:453px;font-size:11px;line-height:20px;height:20px;color:#303030;white-space:nowrap;letter-spacing:-0.100px;left:451px;width:600px;text-align:right;">0,00</div>
<div style="top:453px;font-size:11px;line-height:20px;height:20px;color:#303030;white-space:nowrap;letter-spacing:-0.100px;left:527px;width:600px;text-align:right;">0,00</div>
<div style="top:453px;font-size:11px;line-height:20px;height:20px;color:#303030;white-space:nowrap;letter-spacing:-0.100px;left:657px;width:600px;text-align:right;">110,00</div>
<div style="top:453px;font-size:11px;line-height:20px;height:20px;color:#303030;white-space:nowrap;letter-spacing:-0.100px;left:771px;width:600px;text-align:right;">222,49</div>
<div style="top:453px;font-size:11px;line-height:20px;height:20px;color:#303030;white-space:nowrap;letter-spacing:-0.100px;left:885px;width:600px;text-align:right;">0,00</div>
<div style="top:453px;font-size:11px;line-height:20px;height:20px;color:#303030;white-space:nowrap;font-style:italic;letter-spacing:-0.100px;left:1287px;width:473px;text-align:center;">1</div>
<div style="top:453px;font-size:11px;line-height:20px;height:20px;color:#303030;white-space:nowrap;letter-spacing:-0.100px;left:1072px;width:600px;text-align:right;">332,49</div>
<div style="top:468px;font-size:11px;line-height:20px;height:20px;color:#303030;white-space:nowrap;letter-spacing:-0.089px;left:26px;">Содержание жилья ...</div>
<div style="top:468px;font-size:11px;line-height:20px;height:20px;color:#303030;white-space:nowrap;letter-spacing:0.050px;left:104px;width:465px;text-align:center;">м2</div>
<div style="top:468px;font-size:11px;line-height:20px;height:20px;color:#303030;white-space:nowrap;letter-spacing:-0.100px;left:-151px;width:600px;text-align:right;">14,000000</div>
<div style="top:468px;font-size:11px;line-height:20px;height:20px;color:#303030;white-space:nowrap;letter-spacing:-0.100px;left:-70px;width:600px;text-align:right;">X</div>
<div style="top:468px;font-size:11px;line-height:20px;height:20px;color:#303030;white-space:nowrap;letter-spacing:-0.100px;left:11px;width:600px;text-align:right;">15,4</div>
<div style="top:468px;font-size:11px;line-height:20px;height:20px;color:#303030;white-space:nowrap;letter-spacing:-0.100px;left:125px;width:600px;text-align:right;">215,60</div>
<div style="top:468px;font-size:11px;line-height:20px;height:20px;color:#303030;white-space:nowrap;letter-spacing:-0.100px;left:239px;width:600px;text-align:right;">0,00</div>
<div style="top:468px;font-size:11px;line-height:20px;height:20px;color:#303030;white-space:nowrap;letter-spacing:-0.100px;left:353px;width:600px;text-align:right;">0,00</div>
<div style="top:468px;font-size:11px;line-height:20px;height:20px;color:#303030;white-space:nowrap;letter-spacing:-0.100px;left:451px;width:600px;text-align:right;">0,00</div>
<div style="top:468px;font-size:11px;line-height:20px;height:20px;color:#303030;white-space:nowrap;letter-spacing:-0.100px;left:527px;width:600px;text-align:right;">0,00</div>
<div style="top:468px;font-size:11px;line-height:20px;height:20px;color:#303030;white-space:nowrap;letter-spacing:-0.100px;left:657px;width:600px;text-align:right;">215,60</div>
<div style="top:468px;font-size:11px;line-height:20px;height:20px;color:#303030;white-space:nowrap;letter-spacing:-0.100px;left:771px;width:600px;text-align:right;">0,00</div>
<div style="top:468px;font-size:11px;line-height:20px;height:20px;color:#303030;white-space:nowrap;letter-spacing:-0.100px;left:885px;width:600px;text-align:right;">0,00</div>
<div style="top:468px;font-size:11px;line-height:20px;height:20px;color:#303030;white-space:nowrap;font-style:italic;letter-spacing:-0.100px;left:1287px;width:473px;text-align:center;">1</div>
<div style="top:468px;font-size:11px;line-height:20px;height:20px;color:#303030;white-space:nowrap;letter-spacing:-0.100px;left:1072px;width:600px;text-align:right;">215,60</div>
<div style="top:498px;font-size:11px;line-height:20px;height:20px;color:#303030;white-space:nowrap;letter-spacing:0.050px;left:26px;">Холодное водоснабжение</div>
<div style="top:498px;font-size:11px;line-height:20px;height:20px;color:#303030;white-space:nowrap;letter-spacing:0.050px;left:104px;width:465px;text-align:center;">м3</div>
<div style="top:498px;font-size:11px;line-height:20px;height:20px;color:#303030;white-space:nowrap;letter-spacing:-0.100px;left:-151px;width:600px;text-align:right;">0,000000</div>
<div style="top:498px;font-size:11px;line-height:20px;height:20px;color:#303030;white-space:nowrap;letter-spacing:-0.100px;left:-70px;width:600px;text-align:right;">X</div>
<div style="top:498px;font-size:11px;line-height:20px;height:20px;color:#303030;white-space:nowrap;letter-spacing:-0.100px;left:11px;width:600px;text-align:right;">19,85</div>
<div style="top:498px;font-size:11px;line-height:20px;height:20px;color:#303030;white-space:nowrap;letter-spacing:-0.100px;left:125px;width:600px;text-align:right;">0,00</div>
<div style="top:498px;font-size:11px;line-height:20px;height:20px;color:#303030;white-space:nowrap;letter-spacing:-0.100px;left:239px;width:600px;text-align:right;">0,00</div>
<div style="top:498px;font-size:11px;line-height:20px;height:20px;color:#303030;white-space:nowrap;letter-spacing:-0.100px;left:353px;width:600px;text-align:right;">0,00</div>
<div style="top:498px;font-size:11px;line-height:20px;height:20px;color:#303030;white-space:nowrap;letter-spacing:-0.100px;left:451px;width:600px;text-align:right;">0,00</div>
<div style="top:498px;font-size:11px;line-height:20px;height:20px;color:#303030;white-space:nowrap;letter-spacing:-0.100px;left:527px;width:600px;text-align:right;">0,00</div>
<div style="top:498px;font-size:11px;line-height:20px;height:20px;color:#303030;white-space:nowrap;letter-spacing:-0.100px;left:657px;width:600px;text-align:right;">0,00</div>
<div style="top:498px;font-size:11px;line-height:20px;height:20px;color:#303030;white-space:nowrap;letter-spacing:-0.100px;left:771px;width:600px;text-align:right;">453,25</div>
<div style="top:498px;font-size:11px;line-height:20px;height:20px;color:#303030;white-space:nowrap;letter-spacing:-0.100px;left:885px;width:600px;text-align:right;">0,00</div>
<div style="top:498px;font-size:11px;line-height:20px;height:20px;color:#303030;white-space:nowrap;font-style:italic;letter-spacing:-0.100px;left:1287px;width:473px;text-align:center;">1</div>
<div style="top:498px;font-size:11px;line-height:20px;height:20px;color:#303030;white-space:nowrap;letter-spacing:-0.100px;left:1072px;width:600px;text-align:right;">453,25</div>
<div style="top:528px;font-size:11px;line-height:20px;height:20px;color:#303030;white-space:nowrap;letter-spacing:0.050px;left:26px;">Водоснабжение</div>
<div style="top:528px;font-size:11px;line-height:20px;height:20px;color:#303030;white-space:nowrap;letter-spacing:0.050px;left:104px;width:465px;text-align:center;">м3</div>
<div style="top:528px;font-size:11px;line-height:20px;height:20px;color:#303030;white-space:nowrap;letter-spacing:-0.100px;left:-151px;width:600px;text-align:right;">0,000000</div>
<div style="top:528px;font-size:11px;line-height:20px;height:20px;color:#303030;white-space:nowrap;letter-spacing:-0.100px;left:-70px;width:600px;text-align:right;">0,000000</div>
<div style="top:528px;font-size:11px;line-height:20px;height:20px;color:#303030;white-space:nowrap;letter-spacing:-0.100px;left:11px;width:600px;text-align:right;">14,4</div>
<div style="top:528px;font-size:11px;line-height:20px;height:20px;color:#303030;white-space:nowrap;letter-spacing:-0.100px;left:125px;width:600px;text-align:right;">0,00</div>
<div style="top:528px;font-size:11px;line-height:20px;height:20px;color:#303030;white-space:nowrap;letter-spacing:-0.100px;left:239px;width:600px;text-align:right;">0,00</div>
<div style="top:528px;font-size:11px;line-height:20px;height:20px;color:#303030;white-space:nowrap;letter-spacing:-0.100px;left:353px;width:600px;text-align:right;">0,00</div>
<div style="top:528px;font-size:11px;line-height:20px;height:20px;color:#303030;white-space:nowrap;letter-spacing:-0.100px;left:451px;width:600px;text-align:right;">0,00</div>
<div style="top:528px;font-size:11px;line-height:20px;height:20px;color:#303030;white-space:nowrap;letter-spacing:-0.100px;left:527px;width:600px;text-align:right;">0,00</div>
<div style="top:528px;font-size:11px;line-height:20px;height:20px;color:#303030;white-space:nowrap;letter-spacing:-0.100px;left:657px;width:600px;text-align:right;">0,00</div>
<div style="top:528px;font-size:11px;line-height:20px;height:20px;color:#303030;white-space:nowrap;letter-spacing:-0.100px;left:771px;width:600px;text-align:right;">328,80</div>
<div style="top:528px;font-size:11px;line-height:20px;height:20px;color:#303030;white-space:nowrap;letter-spacing:-0.100px;left:885px;width:600px;text-align:right;">0,00</div>
<div style="top:528px;font-size:11px;line-height:20px;height:20px;color:#303030;white-space:nowrap;font-style:italic;letter-spacing:-0.100px;left:1287px;width:473px;text-align:center;">1</div>
<div style="top:528px;font-size:11px;line-height:20px;height:20px;color:#303030;white-space:nowrap;letter-spacing:-0.100px;left:1072px;width:600px;text-align:right;">328,80</div>
<div style="top:543px;font-size:11px;line-height:20px;height:20px;color:#262626;white-space:nowrap;font-weight:bold;letter-spacing:0.119px;left:14px;">Итого к оплате за расчетный период</div>
<div style="top:543px;font-size:11px;line-height:20px;height:20px;color:#303030;white-space:nowrap;letter-spacing:-0.100px;left:125px;width:600px;text-align:right;">325,60</div>
<div style="top:543px;font-size:11px;line-height:20px;height:20px;color:#303030;white-space:nowrap;letter-spacing:-0.100px;left:353px;width:600px;text-align:right;">0,00</div>
<div style="top:543px;font-size:11px;line-height:20px;height:20px;color:#303030;white-space:nowrap;letter-spacing:-0.100px;left:451px;width:600px;text-align:right;">0,00</div>
<div style="top:543px;font-size:11px;line-height:20px;height:20px;color:#303030;white-space:nowrap;letter-spacing:-0.100px;left:527px;width:600px;text-align:right;">0,00</div>
<div style="top:543px;font-size:11px;line-height:20px;height:20px;color:#303030;white-space:nowrap;letter-spacing:-0.100px;left:657px;width:600px;text-align:right;">325,60</div>
<div style="top:543px;font-size:11px;line-height:20px;height:20px;color:#303030;white-space:nowrap;letter-spacing:-0.100px;left:771px;width:600px;text-align:right;">1 004,54</div>
<div style="top:543px;font-size:11px;line-height:20px;height:20px;color:#303030;white-space:nowrap;letter-spacing:-0.100px;left:885px;width:600px;text-align:right;">0,00</div>
<div style="top:543px;font-size:11px;line-height:20px;height:20px;color:#262626;white-space:nowrap;font-weight:bold;letter-spacing:-0.191px;left:1072px;width:600px;text-align:right;">1 330,14</div>
<div style="top:558px;font-size:11px;line-height:20px;height:20px;color:#262626;white-space:nowrap;font-weight:bold;letter-spacing:0.034px;left:958px;width:600px;text-align:right;">Внесено оплат от 01.04.2025</div>
<div style="top:558px;font-size:11px;line-height:20px;height:20px;color:#262626;white-space:nowrap;font-weight:bold;letter-spacing:-0.150px;left:1072px;width:600px;text-align:right;">1 000,00</div>
<div style="top:573px;font-size:11px;line-height:20px;height:20px;color:#262626;white-space:nowrap;font-weight:bold;letter-spacing:-0.201px;left:958px;width:600px;text-align:right;">ИТОГО К ОПЛАТЕ</div>
<div style="top:573px;font-size:11px;line-height:20px;height:20px;color:#262626;white-space:nowrap;font-weight:bold;letter-spacing:-0.150px;left:1072px;width:600px;text-align:right;">330,14</div>
<div style="left:206px;top:600px;width:1px;height:1px;background:#555;"></div>
<div style="left:208px;top:600px;width:1px;height:1px;background:#777;"></div>
<svg style="left:1667px;top:441px" width="7" height="7" viewBox="0 0 7 7"><path d="M0 0 H7 V7Z" fill="#c00000"/></svg>
<div style="left:9px;top:452px;width:722px;height:37px;box-sizing:border-box;border:3px solid #c00000"></div>
</body></html>
